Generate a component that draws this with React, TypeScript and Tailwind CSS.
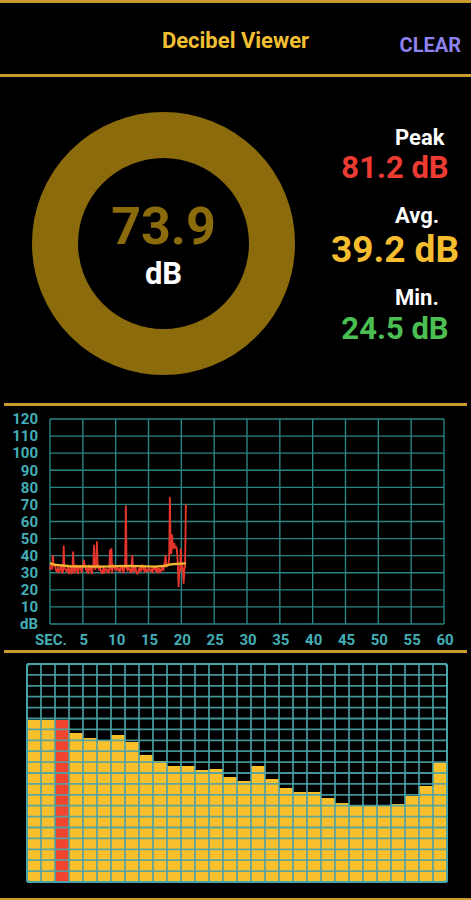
import React from "react";

// ---------- line chart data ----------
const X0 = 50;
const X1 = 444;
const Y0 = 13;
const Y1 = 218;
const tx = (t: number) => X0 + (t * (X1 - X0)) / 60;
const ty = (db: number) => Y1 - (db * (Y1 - Y0)) / 120;

let seed = 11;
const rnd = () => {
  seed = (seed * 16807) % 2147483647;
  return (seed - 1) / 2147483646;
};

const raw: { t: number; v: number }[] = [];
for (let t = 0; t <= 20.7; t += 0.11) {
  let v = 32 + (rnd() - 0.5) * 5;
  if (t < 0.8) v += 2.5;
  if (t > 17 && t < 18.3) v += (t - 17) * 4;
  if (t >= 18.3 && t < 19.4) v = 42 + (rnd() - 0.5) * 8;
  raw.push({ t, v });
}
const spikes: [number, number][] = [
  [0.45, 40],
  [2.1, 45.5],
  [3.5, 42],
  [5.2, 37],
  [6.7, 46],
  [7.2, 48],
  [9.1, 43],
  [9.4, 44],
  [11.6, 69],
  [12.5, 40],
  [17.6, 40],
  [18.3, 74],
  [18.6, 52],
  [18.9, 47],
  [19.2, 45],
  [19.6, 22],
  [19.9, 44],
  [20.3, 24],
  [20.7, 70],
];
for (const [t, v] of spikes) {
  let best = 0;
  for (let i = 0; i < raw.length; i++) {
    if (Math.abs(raw[i].t - t) < Math.abs(raw[best].t - t)) best = i;
  }
  raw[best].v = v;
}
raw[raw.length - 1] = { t: 20.7, v: 70 };
const redPts = raw.map((p) => `${tx(p.t).toFixed(2)},${ty(p.v).toFixed(2)}`).join(" ");
const avg: [number, number][] = [
  [0, 35.5],
  [1, 34.5],
  [3, 33.8],
  [8, 33.6],
  [12, 34],
  [16, 33.6],
  [17.5, 34],
  [18.5, 35],
  [20.7, 35.5],
];
const avgPts = avg.map(([t, v]) => `${tx(t).toFixed(2)},${ty(v).toFixed(2)}`).join(" ");

const yLabels = ["120", "110", "100", "90", "80", "70", "60", "50", "40", "30", "20", "10", "dB"];
const xLabels = ["SEC.", "5", "10", "15", "20", "25", "30", "35", "40", "45", "50", "55", "60"];

// ---------- spectrum data ----------
const SX0 = 27;
const SY0 = 11;
const SY1 = 229;
const CW = 14;
const ROWS = 20;
const RH = (SY1 - SY0) / ROWS;
const tops = [
  720, 720, 720, 733, 738, 740, 735, 742, 755, 761, 766, 766, 770, 769, 777, 781, 766, 779, 788, 792, 792, 798, 803, 806,
  806, 806, 804, 796, 786, 763,
].map((y) => y - 653);

function LineChart() {
  return (
    <svg width={471} height={244} className="block" fontFamily="Roboto, sans-serif">
      {Array.from({ length: 13 }).map((_, i) => {
        const y = Y0 + (i * (Y1 - Y0)) / 12;
        return <line key={"h" + i} x1={X0} x2={X1} y1={y} y2={y} stroke="#2b8484" strokeWidth={1.4} />;
      })}
      {Array.from({ length: 13 }).map((_, j) => {
        const x = X0 + (j * (X1 - X0)) / 12;
        return <line key={"v" + j} x1={x} x2={x} y1={Y0} y2={Y1} stroke="#2b8484" strokeWidth={1.4} />;
      })}
      {yLabels.map((l, i) => (
        <text
          key={"yl" + i}
          x={38}
          y={Y0 + (i * (Y1 - Y0)) / 12 + 5.3}
          textAnchor="end"
          fontSize={15}
          fontWeight={700}
          fill="#44adb5"
        >
          {l}
        </text>
      ))}
      {xLabels.map((l, j) => (
        <text
          key={"xl" + j}
          x={X0 + (j * (X1 - X0)) / 12 + 1}
          y={239}
          textAnchor="middle"
          fontSize={15}
          fontWeight={700}
          fill="#44adb5"
        >
          {l}
        </text>
      ))}
      <polyline points={redPts} fill="none" stroke="#e3352b" strokeWidth={1.9} strokeLinejoin="round" />
      <polyline points={avgPts} fill="none" stroke="#f3b532" strokeWidth={2.4} strokeLinejoin="round" />
    </svg>
  );
}

function Spectrum() {
  return (
    <svg width={471} height={245} className="block">
      {tops.map((top, i) => (
        <rect
          key={"b" + i}
          x={SX0 + i * CW}
          y={top}
          width={CW}
          height={SY1 - top}
          fill={i === 2 ? "#f2452f" : "#f9c02b"}
        />
      ))}
      {Array.from({ length: ROWS + 1 }).map((_, i) => {
        const y = SY0 + i * RH;
        return (
          <line key={"h" + i} x1={SX0} x2={SX0 + 30 * CW} y1={y} y2={y} stroke="#4aa3a6" strokeWidth={1.8} strokeOpacity={0.9} />
        );
      })}
      {Array.from({ length: 31 }).map((_, j) => {
        const x = SX0 + j * CW;
        return (
          <line key={"v" + j} x1={x} x2={x} y1={SY0} y2={SY1} stroke="#4aa3a6" strokeWidth={1.8} strokeOpacity={0.9} />
        );
      })}
      <rect
        x={SX0}
        y={SY0}
        width={30 * CW}
        height={SY1 - SY0}
        rx={3}
        fill="none"
        stroke="#4aa3a6"
        strokeWidth={2}
      />
    </svg>
  );
}

export default function App() {
  return (
    <div className="w-[471px] h-[900px] bg-black font-['Roboto','Liberation_Sans',sans-serif] flex flex-col overflow-hidden">
      {/* header */}
      <div className="h-[77px] border-t-[3px] border-b-[3px] border-[#c99a2e] flex items-center relative shrink-0">
        <div className="flex-1 text-center text-[22px] font-bold text-[#f2bf32] pt-[3px]">Decibel Viewer</div>
        <div className="absolute right-[10px] top-[27px] text-[20px] font-bold text-[#8e82ee]">CLEAR</div>
      </div>

      {/* meter */}
      <div className="h-[326px] flex items-start pl-[32px] pt-[35px] shrink-0">
        <div className="w-[263px] h-[263px] rounded-full border-[46px] border-[#8b6b0b] flex flex-col items-center justify-center shrink-0">
          <div className="text-[52px] leading-none font-bold text-[#8b6b0b] mt-[3px]">73.9</div>
          <div className="text-[31px] leading-none font-bold text-white mt-[5px]">dB</div>
        </div>
        <div className="w-[150px] ml-[25px] mt-[15px] flex flex-col font-bold">
          <div className="text-[22px] leading-none text-white pl-[75px]">Peak</div>
          <div className="text-[31px] leading-none text-[#ec3b33] text-center mt-[3px]">81.2 dB</div>
          <div className="text-[22px] leading-none text-white pl-[75px] mt-[22px]">Avg.</div>
          <div className="text-[37px] leading-none text-[#f6bd2e] text-center mt-[4px] whitespace-nowrap">39.2 dB</div>
          <div className="text-[22px] leading-none text-white pl-[75px] mt-[19px]">Min.</div>
          <div className="text-[31px] leading-none text-[#4cbf52] text-center mt-[4px]">24.5 dB</div>
        </div>
      </div>

      <div className="h-[3px] mx-[4px] bg-[#c99a2e] shrink-0" />

      <div className="h-[244px] shrink-0">
        <LineChart />
      </div>

      <div className="h-[3px] mx-[4px] bg-[#c99a2e] shrink-0" />

      <div className="h-[245px] shrink-0">
        <Spectrum />
      </div>

      <div className="h-[2px] bg-[#c99a2e] shrink-0" />
    </div>
  );
}
